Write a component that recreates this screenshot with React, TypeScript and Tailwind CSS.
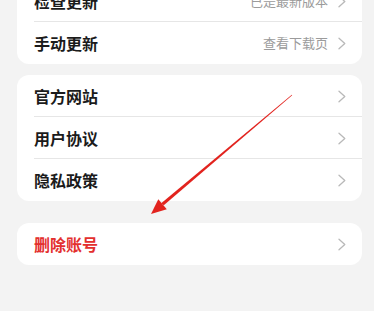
import React from 'react'

type Row = { label: string; value?: string; danger?: boolean }

const groups: Row[][] = [
  [{ label: '检查更新', value: '已是最新版本' }, { label: '手动更新', value: '查看下载页' }],
  [{ label: '官方网站' }, { label: '用户协议' }, { label: '隐私政策' }],
  [{ label: '删除账号', danger: true }],
]

function Chevron() {
  return (
    <svg width="10" height="13" viewBox="0 0 10 13" className="shrink-0">
      <path d="M2 1.2 L7.8 6.5 L2 11.8" fill="none" stroke="#b9b9b9" strokeWidth="1.3" strokeLinejoin="round" strokeLinecap="round" />
    </svg>
  )
}

function SettingRow({ row, last }: { row: Row; last: boolean }) {
  return (
    <div className="relative flex h-[42px] items-center pl-[17px] pr-[15px]">
      <span className={`flex-1 text-[16px] font-semibold ${row.danger ? 'text-[#e3302e]' : 'text-[#1b1b1b]'}`}>
        {row.label}
      </span>
      {row.value && <span className="mr-[9px] text-[13px] text-[#9b9b9b]">{row.value}</span>}
      <Chevron />
      {!last && <div className="absolute bottom-0 left-[17px] right-0 h-px bg-[#e6e6e6]" />}
    </div>
  )
}

export default function App() {
  return (
    <div
      className="relative h-[311px] w-[374px] overflow-hidden bg-[#f3f3f3] pl-[17px] pr-[12px]"
      style={{ fontFamily: '"Noto Sans CJK SC", "Noto Sans", sans-serif' }}
    >
      <div className="-mt-[20px] overflow-hidden rounded-xl bg-white">
        {groups[0].map((r, i) => (
          <SettingRow key={r.label} row={r} last={i === groups[0].length - 1} />
        ))}
      </div>
      <div className="mt-[11px] overflow-hidden rounded-xl bg-white">
        {groups[1].map((r, i) => (
          <SettingRow key={r.label} row={r} last={i === groups[1].length - 1} />
        ))}
      </div>
      <div className="mt-[22px] overflow-hidden rounded-xl bg-white">
        {groups[2].map((r, i) => (
          <SettingRow key={r.label} row={r} last={i === groups[2].length - 1} />
        ))}
      </div>

      {/* annotation arrow */}
      <svg className="pointer-events-none absolute left-0 top-0" width="374" height="311" viewBox="0 0 374 311">
        <polygon points="292.2,95.2 291.8,94.8 161.2,203.3 163.8,205.3" fill="#e2231e" />
        <polygon points="151,214 158.3,199.3 166.8,209.3" fill="#e2231e" />
      </svg>
    </div>
  )
}
